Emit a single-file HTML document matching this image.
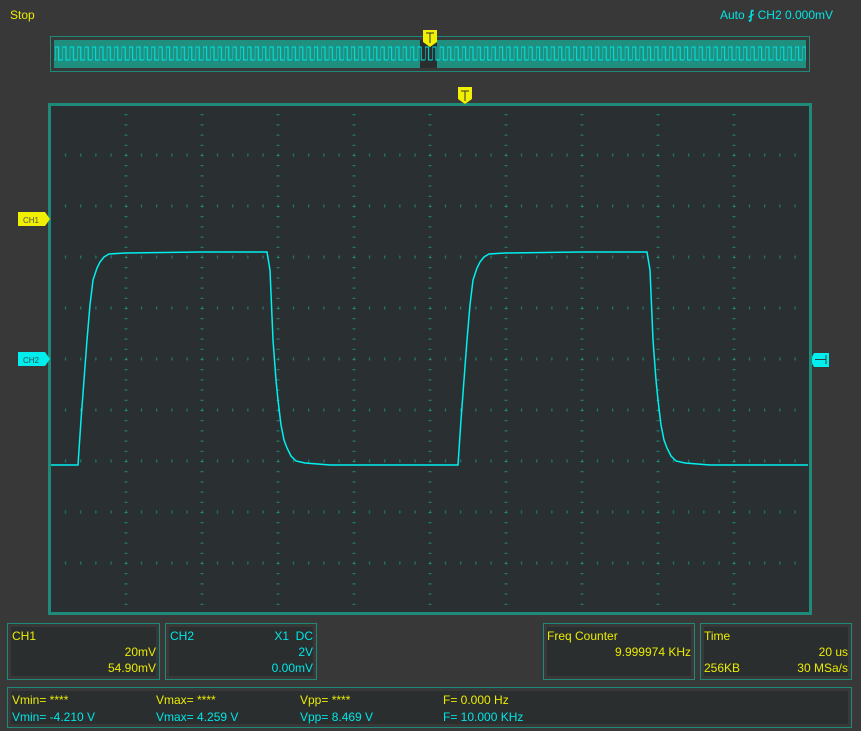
<!DOCTYPE html>
<html><head><meta charset="utf-8"><style>
body{margin:0;width:861px;height:731px;background:#383838;overflow:hidden;position:relative;font-family:"Liberation Sans",sans-serif;font-size:12px}
.t{position:absolute;white-space:nowrap;line-height:14px}
.y{color:#ecec00}.c{color:#00e6e6}
.box{position:absolute;border:1px solid #1f8a7a;box-sizing:border-box}
.box>div.in{position:absolute;left:3px;top:3px;right:3px;bottom:3px;background:#2a2e2f}
</style></head><body>
<div class="t y" style="left:10px;top:8px">Stop</div>
<div class="t c" style="left:720px;top:8px">Auto <span style="font-weight:bold">&#x2A0F;</span> CH2 0.000mV</div>

<svg width="861" height="731" style="position:absolute;left:0;top:0">
<defs>
<pattern id="ov" patternUnits="userSpaceOnUse" x="55" y="40" width="7.4" height="28">
<path d="M0 20 V7 H3.6 V20 H7.4" fill="none" stroke="#00e6e6" stroke-width="1"/>
</pattern>
<pattern id="rowdots" patternUnits="userSpaceOnUse" x="51" y="153.5" width="15.2" height="51">
<rect x="14" y="0" width="1" height="3" fill="#1f8a7a"/>
</pattern>
<pattern id="coldash" patternUnits="userSpaceOnUse" x="124.5" y="104" width="76" height="10.2">
<rect x="0" y="0" width="3" height="1" fill="#1f8a7a"/>
</pattern>
</defs>
<!-- overview -->
<rect x="50.5" y="36.5" width="759" height="35" fill="none" stroke="#1f8a7a"/>
<rect x="54" y="40" width="752" height="28" fill="#1f9080"/>
<rect x="420" y="40" width="17" height="28" fill="#2a2e2f"/>
<rect x="54" y="40" width="752" height="28" fill="url(#ov)"/>
<path d="M423 30h14v12l-7 5l-7-5z" fill="#f0f000"/>
<path d="M426 33h8M430 33v10" stroke="#333" stroke-width="1"/>
<!-- screen -->
<rect x="49.5" y="104.5" width="761" height="509" fill="#2a2f31" stroke="#1f8a7a" stroke-width="3"/>
<rect x="52" y="106" width="756" height="506" fill="url(#rowdots)"/>
<rect x="52" y="107" width="756" height="504" fill="url(#coldash)"/>
<path d="M458 87h14v12l-7 5l-7-5z" fill="#f0f000"/>
<path d="M461 91h8M465 91v10" stroke="#333" stroke-width="1"/>
<!-- CH markers -->
<path d="M18 212h27l5 7l-5 7h-27z" fill="#f0f000"/>
<text x="23" y="223" font-size="8" fill="#555" font-family="Liberation Sans">CH1</text>
<path d="M18 352h27l5 7l-5 7h-27z" fill="#00eeee"/>
<text x="23" y="363" font-size="8" fill="#2a5050" font-family="Liberation Sans">CH2</text>
<path d="M814 353h15v14h-15l-2-4v-6z" fill="#00eeee"/>
<path d="M815 359.5h11M826 355v9" stroke="#2a4040" stroke-width="1"/>
<!-- waveform -->
<path fill="none" stroke="#00f0f0" stroke-width="1.5" d="
M51 465 L78 465 L81 420 L84 380 L87 340 L90 305 L93 280 L97 268 L100 262 L104 257 L109 254 L125 253 L200 252 L267 252 L270 270 L273 340 L276 380 L278 400 L281 425 L284 440 L287 448 L291 456 L296 461 L305 463 L330 465 L458 465 L461 420 L464 380 L467 340 L470 305 L473 280 L477 268 L480 262 L484 257 L489 254 L505 253 L580 252 L647 252 L650 270 L653 340 L656 380 L658 400 L661 425 L664 440 L667 448 L671 456 L676 461 L685 463 L710 465 L808 465"/>
</svg>

<div class="box" style="left:7px;top:623px;width:153px;height:57px"><div class="in"></div></div>
<div class="box" style="left:165px;top:623px;width:152px;height:57px"><div class="in"></div></div>
<div class="box" style="left:543px;top:623px;width:152px;height:57px"><div class="in"></div></div>
<div class="box" style="left:700px;top:623px;width:152px;height:57px"><div class="in"></div></div>
<div class="box" style="left:7px;top:687px;width:845px;height:41px"><div class="in"></div></div>

<div class="t y" style="left:12px;top:629px">CH1</div>
<div class="t y" style="right:705px;top:645px">20mV</div>
<div class="t y" style="right:705px;top:661px">54.90mV</div>
<div class="t c" style="left:170px;top:629px">CH2</div>
<div class="t c" style="right:548px;top:629px">X1&nbsp;&nbsp;DC</div>
<div class="t c" style="right:548px;top:645px">2V</div>
<div class="t c" style="right:548px;top:661px">0.00mV</div>
<div class="t y" style="left:547px;top:629px">Freq Counter</div>
<div class="t y" style="right:170px;top:645px">9.999974 KHz</div>
<div class="t y" style="left:704px;top:629px">Time</div>
<div class="t y" style="right:13px;top:645px">20 us</div>
<div class="t y" style="left:704px;top:661px">256KB</div>
<div class="t y" style="right:13px;top:661px">30 MSa/s</div>

<div class="t y" style="left:12px;top:693px">Vmin= ****</div>
<div class="t c" style="left:12px;top:710px">Vmin= -4.210 V</div>
<div class="t y" style="left:156px;top:693px">Vmax= ****</div>
<div class="t c" style="left:156px;top:710px">Vmax= 4.259 V</div>
<div class="t y" style="left:300px;top:693px">Vpp= ****</div>
<div class="t c" style="left:300px;top:710px">Vpp= 8.469 V</div>
<div class="t y" style="left:443px;top:693px">F= 0.000 Hz</div>
<div class="t c" style="left:443px;top:710px">F= 10.000 KHz</div>
</body></html>
